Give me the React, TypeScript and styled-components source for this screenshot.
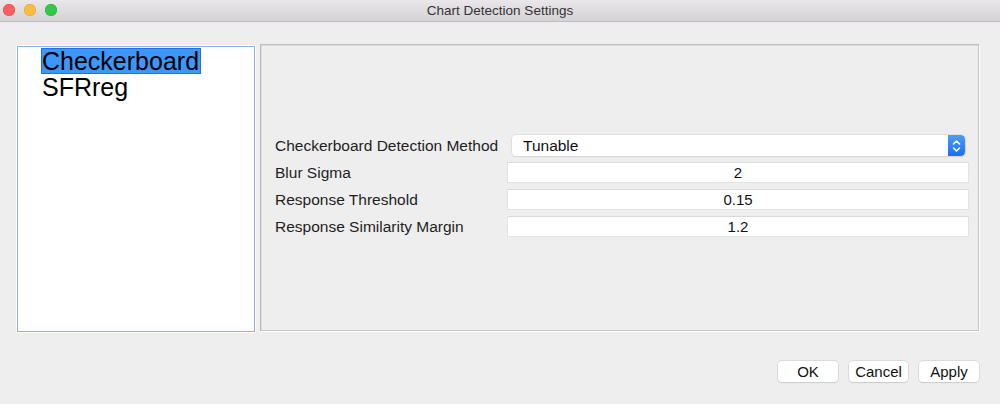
import React, { useState } from 'react';
import styled, { createGlobalStyle } from 'styled-components';

const GlobalStyle = createGlobalStyle`
  html, body {
    margin: 0;
    padding: 0;
    background: #eeeeee;
  }
  body {
    font-family: "Liberation Sans", Arial, Helvetica, sans-serif;
    color: #1a1a1a;
  }
`;

const Window = styled.div`
  width: 1000px;
  height: 404px;
  display: flex;
  flex-direction: column;
  background: #eeeeee;
  overflow: hidden;
`;

const TitleBar = styled.div`
  position: relative;
  height: 21px;
  flex: none;
  display: flex;
  align-items: center;
  justify-content: center;
  background: linear-gradient(#e9e7e9, #d4d2d4);
  border-bottom: 1px solid #bcbcbc;
  font-size: 13.5px;
  color: #333;
`;

const Lights = styled.div`
  position: absolute;
  left: 3px;
  top: 4px;
  display: flex;
  gap: 9px;
`;

const Light = styled.span<{ $color: string; $edge: string }>`
  width: 12px;
  height: 12px;
  border-radius: 50%;
  background: ${(p) => p.$color};
  box-shadow: inset 0 0 0 0.5px ${(p) => p.$edge};
`;

const Body = styled.div`
  flex: 1;
  display: flex;
  flex-direction: column;
  padding: 22px 21px 21px 16px;
`;

const Main = styled.div`
  display: flex;
  gap: 4px;
  height: 288px;
`;

const ListBox = styled.div`
  width: 240px;
  flex: none;
  margin-top: 1px;
  height: 288px;
  box-sizing: border-box;
  background: #ffffff;
  border: 1px solid #ffffff;
  outline: 1px solid #8db3e6;
  outline-offset: -2px;
  padding: 2px 0 0 24px;
  display: flex;
  flex-direction: column;
  align-items: flex-start;
`;

const ListItem = styled.div<{ $selected?: boolean }>`
  font-size: 25px;
  line-height: 26px;
  padding: 0 2px 0 1px;
  color: #000;
  background: ${(p) => (p.$selected ? '#3d97fb' : 'transparent')};
  outline: ${(p) => (p.$selected ? '1px solid #2c6fd1' : 'none')};
  outline-offset: -1px;
  cursor: default;
`;

const Panel = styled.div`
  flex: 1;
  box-sizing: border-box;
  height: 287px;
  border: 1px solid #c5c5c5;
  border-top-color: #bdbdbd;
  border-left-color: #bdbdbd;
  box-shadow: 1px 1px 0 #ffffff, inset 1px 1px 0 #dcdcdc;
  display: flex;
  align-items: center;
  padding: 0 9px 0 14px;
`;

const Form = styled.div`
  width: 100%;
  display: grid;
  grid-template-columns: 232px 1fr;
  row-gap: 6px;
  align-items: center;
  margin-top: -3px;
`;

const Label = styled.div`
  font-size: 15.5px;
  color: #1e1e1e;
  white-space: nowrap;
`;

const Combo = styled.div`
  margin: 0 4px 0 5px;
  height: 21px;
  display: flex;
  align-items: stretch;
  background: #ffffff;
  border-radius: 4px;
  box-shadow: 0 0 0 0.5px #d0d0d0, 0 1px 1px rgba(0, 0, 0, 0.08);
  overflow: hidden;
`;

const ComboText = styled.div`
  flex: 1;
  font-size: 15.5px;
  padding: 2px 0 0 11px;
  color: #111;
`;

const Stepper = styled.div`
  width: 17px;
  background: linear-gradient(#4c9bfb, #1a6ff3);
  display: flex;
  align-items: center;
  justify-content: center;
  border-radius: 0 4px 4px 0;
`;

const Field = styled.div`
  height: 21px;
  box-sizing: border-box;
  background: #ffffff;
  border: 1px solid #e2e2e2;
  border-top-color: #d9d9d9;
  font-size: 15px;
  display: flex;
  align-items: center;
  justify-content: center;
  color: #111;
`;

const Buttons = styled.div`
  margin-top: 29px;
  display: flex;
  justify-content: flex-end;
  gap: 11px;
`;

const Button = styled.button<{ $w: number }>`
  width: ${(p) => p.$w}px;
  height: 21px;
  padding: 0;
  font-family: inherit;
  font-size: 15px;
  color: #111;
  background: #ffffff;
  border: none;
  border-radius: 4px;
  box-shadow: 0 0 0 0.5px #c8c8c8, 0 1px 1px rgba(0, 0, 0, 0.12);
  cursor: default;
`;

const rows = [
  { label: 'Blur Sigma', value: '2' },
  { label: 'Response Threshold', value: '0.15' },
  { label: 'Response Similarity Margin', value: '1.2' },
];

export default function App() {
  const [selected, setSelected] = useState(0);
  const charts = ['Checkerboard', 'SFRreg'];

  return (
    <>
      <GlobalStyle />
      <Window>
        <TitleBar>
          <Lights>
            <Light $color="#fc605c" $edge="#de4a46" />
            <Light $color="#fdbc40" $edge="#dea12f" />
            <Light $color="#34c84a" $edge="#27aa37" />
          </Lights>
          Chart Detection Settings
        </TitleBar>
        <Body>
          <Main>
            <ListBox>
              {charts.map((c, i) => (
                <ListItem key={c} $selected={i === selected} onClick={() => setSelected(i)}>
                  {c}
                </ListItem>
              ))}
            </ListBox>
            <Panel>
              <Form>
                <Label>Checkerboard Detection Method</Label>
                <Combo>
                  <ComboText>Tunable</ComboText>
                  <Stepper>
                    <svg width="9" height="14" viewBox="0 0 9 14" fill="none">
                      <path d="M1.5 5 L4.5 2 L7.5 5" stroke="#fff" strokeWidth="1.6" strokeLinecap="round" strokeLinejoin="round" />
                      <path d="M1.5 9 L4.5 12 L7.5 9" stroke="#fff" strokeWidth="1.6" strokeLinecap="round" strokeLinejoin="round" />
                    </svg>
                  </Stepper>
                </Combo>
                {rows.map((r) => (
                  <React.Fragment key={r.label}>
                    <Label>{r.label}</Label>
                    <Field>{r.value}</Field>
                  </React.Fragment>
                ))}
              </Form>
            </Panel>
          </Main>
          <Buttons>
            <Button $w={60}>OK</Button>
            <Button $w={59}>Cancel</Button>
            <Button $w={60}>Apply</Button>
          </Buttons>
        </Body>
      </Window>
    </>
  );
}
